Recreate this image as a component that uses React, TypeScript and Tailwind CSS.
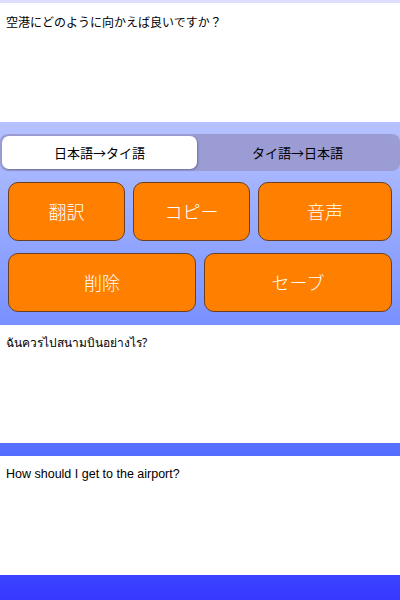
import React from "react";

const font = {
  fontFamily: '"Liberation Sans", "Noto Sans CJK JP", "Noto Sans", sans-serif',
};

const cjk = {
  fontFamily: '"Noto Sans CJK JP", "Liberation Sans", sans-serif',
};

function OrangeButton({ label }: { label: string }) {
  return (
    <button
      className="h-[59px] rounded-[10px] border border-[#6a4020] bg-[#ff8000] text-[18px] font-light text-white"
      style={cjk}
    >
      {label}
    </button>
  );
}

export default function App() {
  return (
    <div
      className="flex h-[600px] w-[400px] flex-col bg-linear-to-b from-[#dedeff] to-[#3838ff] text-[12px] text-black"
      style={font}
    >
      {/* Source text */}
      <div className="mt-[3px] h-[119px] bg-white px-[6px] pt-[12px] leading-[16px]">
        空港にどのように向かえば良いですか？
      </div>

      {/* Controls */}
      <div className="flex h-[203px] flex-col px-[8px] pt-[12px]">
        <div
          className="-mx-[8px] flex h-[37px] rounded-[8px] bg-[#9c9cd4] p-[2px]"
          style={cjk}
        >
          <div className="flex w-[195px] items-center justify-center rounded-[7px] bg-white text-[13px] shadow-[1px_1px_2px_rgba(60,60,110,0.45)]">
            日本語→タイ語
          </div>
          <div className="flex flex-1 items-center justify-center text-[13px]">
            タイ語→日本語
          </div>
        </div>
        <div className="mt-[11px] grid grid-cols-[117px_117px_1fr] gap-x-[8px]">
          <OrangeButton label="翻訳" />
          <OrangeButton label="コピー" />
          <OrangeButton label="音声" />
        </div>
        <div className="mt-[12px] grid grid-cols-2 gap-[8px]">
          <OrangeButton label="削除" />
          <OrangeButton label="セーブ" />
        </div>
      </div>

      {/* Thai result */}
      <div
        className="h-[118px] bg-white px-[6px] pt-[10px] leading-[16px]"
        style={{ fontFamily: '"Noto Sans", "Liberation Sans", sans-serif' }}
      >
        ฉันควรไปสนามบินอย่างไร?
      </div>

      <div className="h-[13px]" />

      {/* English result */}
      <div className="h-[119px] bg-white px-[6px] pt-[10px] text-[12.5px] leading-[16px]">
        How should I get to the airport?
      </div>
    </div>
  );
}
